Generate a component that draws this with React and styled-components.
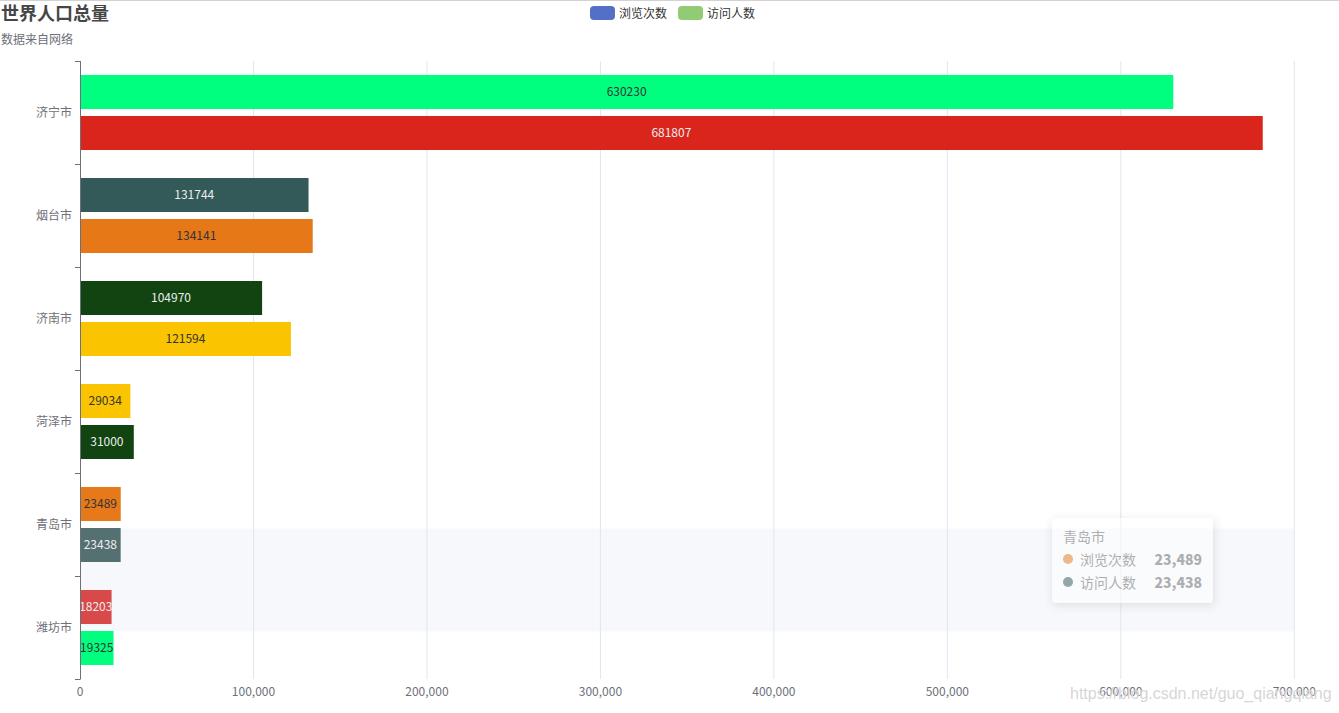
import React from "react";
import styled, { createGlobalStyle } from "styled-components";

const Global = createGlobalStyle`
  html, body { margin: 0; padding: 0; background: #fff; }
  body { font-family: "Noto Sans CJK SC", "Noto Sans", sans-serif; }
`;

const Page = styled.div`
  position: relative;
  width: 1339px;
  height: 713px;
  box-sizing: border-box;
  border-top: 1px solid #d2d2d2;
  overflow: hidden;
  background: #fff;
`;

const Header = styled.header`
  display: grid;
  grid-template-columns: 1fr auto 1fr;
  align-items: start;
  height: 49px;
  padding: 0 0 0 1px;
  box-sizing: border-box;
`;

const TitleBlock = styled.div`
  display: flex;
  flex-direction: column;
  gap: 9px;
`;

const Title = styled.h1`
  margin: 0;
  font-size: 18px;
  line-height: 22px;
  font-weight: 700;
  color: #464646;
  font-family: "Noto Sans CJK SC", sans-serif;
`;

const SubTitle = styled.div`
  font-size: 12px;
  line-height: 14px;
  color: #6e7079;
`;

const Legend = styled.div`
  display: flex;
  gap: 11px;
  padding-top: 5px;
  padding-left: 5px;
`;

const LegendItem = styled.div`
  display: flex;
  align-items: center;
  gap: 4px;
  font-size: 12px;
  line-height: 14px;
  color: #333;
`;

const Swatch = styled.span`
  width: 25px;
  height: 14px;
  border-radius: 4px;
  background: ${(p) => p.$color};
`;

const ChartSvg = styled.svg`
  display: block;
  font-family: "Noto Sans CJK SC", sans-serif;
`;

const Tooltip = styled.div`
  position: absolute;
  left: 1052px;
  top: 517px;
  width: 161px;
  box-sizing: border-box;
  padding: 8px 11px 11px 11px;
  background: #fff;
  border-radius: 4px;
  box-shadow: 1px 2px 10px rgba(0, 0, 0, 0.2);
  opacity: 0.5;
  display: flex;
  flex-direction: column;
  gap: 3px;
`;

const TipTitle = styled.div`
  font-size: 14px;
  line-height: 20px;
  color: #666;
`;

const TipRow = styled.div`
  display: flex;
  align-items: center;
  font-size: 14px;
  line-height: 20px;
  color: #666;
`;

const Dot = styled.span`
  width: 10px;
  height: 10px;
  border-radius: 50%;
  background: ${(p) => p.$color};
  margin-right: 7px;
`;

const TipValue = styled.span`
  margin-left: auto;
  font-weight: 900;
  font-size: 14px;
  color: #666;
`;

const Watermark = styled.div`
  position: absolute;
  left: 1070px;
  top: 683px;
  font-family: "Liberation Sans", Arial, sans-serif;
  font-size: 16px;
  line-height: 20px;
  color: rgba(200, 200, 200, 0.75);
  text-shadow: 0 0 1px rgba(255, 255, 255, 0.9);
  white-space: nowrap;
  pointer-events: none;
`;

const X0 = 80;
const PER = (1294.3 - 80) / 700000;
const TOP = 61;
const BAND = 103;

const data = [
  {
    name: "济宁市",
    bars: [
      { v: 630230, c: "#00ff7f", dark: false },
      { v: 681807, c: "#da251d", dark: true },
    ],
  },
  {
    name: "烟台市",
    bars: [
      { v: 131744, c: "#335958", dark: true },
      { v: 134141, c: "#e67817", dark: false },
    ],
  },
  {
    name: "济南市",
    bars: [
      { v: 104970, c: "#114410", dark: true },
      { v: 121594, c: "#fbc400", dark: false },
    ],
  },
  {
    name: "菏泽市",
    bars: [
      { v: 29034, c: "#fbc400", dark: false },
      { v: 31000, c: "#114410", dark: true },
    ],
  },
  {
    name: "青岛市",
    bars: [
      { v: 23489, c: "#e67a1a", dark: false },
      { v: 23438, c: "#547070", dark: true },
    ],
  },
  {
    name: "潍坊市",
    bars: [
      { v: 18203, c: "#d84a4a", dark: true },
      { v: 19325, c: "#00ff7f", dark: false },
    ],
  },
];

const ticks = [0, 100000, 200000, 300000, 400000, 500000, 600000, 700000];
const fmt = (n) => n.toLocaleString("en-US");

function Chart() {
  const bottom = TOP + BAND * data.length;
  return (
    <ChartSvg width="1339" height="663" viewBox="0 50 1339 663">
      <rect x={X0} y={528.5} width={1294.3 - X0} height={103} fill="rgba(210,219,238,0.2)" />
      {ticks.slice(1).map((t) => (
        <line
          key={t}
          x1={X0 + t * PER}
          x2={X0 + t * PER}
          y1={TOP}
          y2={bottom}
          stroke="#e0e6f1"
          strokeWidth="1"
        />
      ))}
      {data.map((cat, i) => {
        const bt = TOP + BAND * i;
        return (
          <g key={cat.name}>
            {cat.bars.map((b, j) => {
              const y = bt + 14 + j * 41;
              const w = b.v * PER;
              return (
                <g key={j}>
                  <rect x={X0} y={y} width={w} height={34} fill={b.c} />
                  <text
                    x={X0 + w / 2}
                    y={y + 15.5}
                    textAnchor="middle"
                    dominantBaseline="central"
                    fontSize="12"
                    fill={b.dark ? "#eee" : "#333"}
                  >
                    {b.v}
                  </text>
                </g>
              );
            })}
            <text
              x={72}
              y={bt + BAND / 2 - 1.5}
              textAnchor="end"
              dominantBaseline="central"
              fontSize="12"
              fill="#6e7079"
            >
              {cat.name}
            </text>
          </g>
        );
      })}
      <line x1={X0 + 0.5} x2={X0 + 0.5} y1={TOP} y2={bottom} stroke="#6e7079" strokeWidth="1" />
      {Array.from({ length: data.length + 1 }).map((_, k) => (
        <line
          key={k}
          x1={75}
          x2={X0 + 0.5}
          y1={TOP + BAND * k + 0.5}
          y2={TOP + BAND * k + 0.5}
          stroke="#6e7079"
          strokeWidth="1"
        />
      ))}
      {ticks.map((t) => (
        <text
          key={t}
          x={X0 + t * PER}
          y={695.5}
          textAnchor="middle"
          fontSize="12"
          fill="#6e7079"
        >
          {fmt(t)}
        </text>
      ))}
    </ChartSvg>
  );
}

export default function App() {
  return (
    <>
      <Global />
      <Page>
        <Header>
          <TitleBlock>
            <Title>世界人口总量</Title>
            <SubTitle>数据来自网络</SubTitle>
          </TitleBlock>
          <Legend>
            <LegendItem>
              <Swatch $color="#5470c6" />
              浏览次数
            </LegendItem>
            <LegendItem>
              <Swatch $color="#91cc75" />
              访问人数
            </LegendItem>
          </Legend>
          <div />
        </Header>
        <Chart />
        <Watermark>https://blog.csdn.net/guo_qiangqiang</Watermark>
        <Tooltip>
          <TipTitle>青岛市</TipTitle>
          <TipRow>
            <Dot $color="#e67817" />
            浏览次数
            <TipValue>23,489</TipValue>
          </TipRow>
          <TipRow>
            <Dot $color="#335958" />
            访问人数
            <TipValue>23,438</TipValue>
          </TipRow>
        </Tooltip>
      </Page>
    </>
  );
}
